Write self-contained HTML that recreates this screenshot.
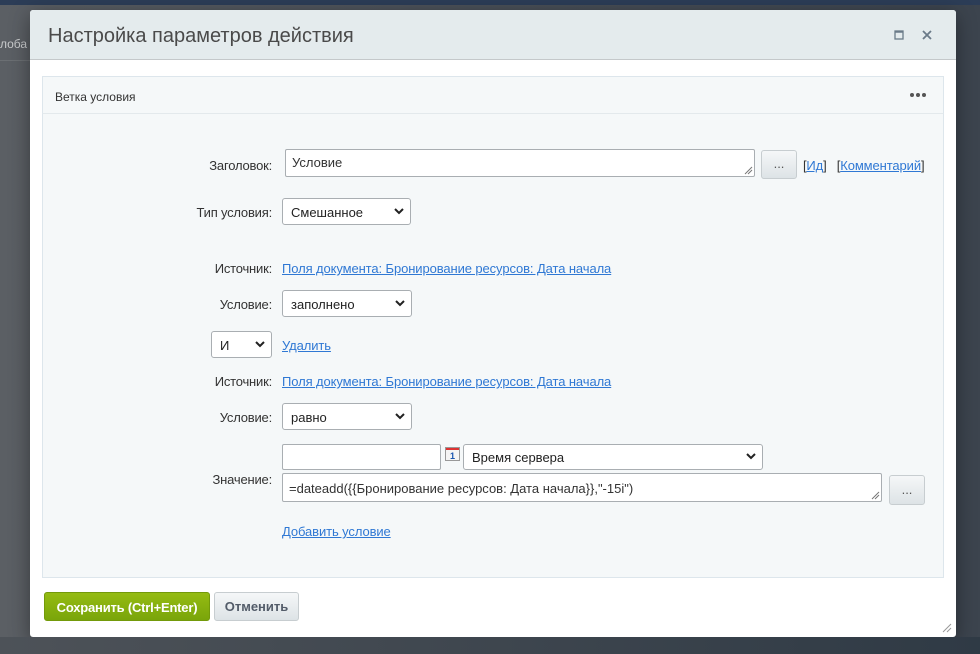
<!DOCTYPE html>
<html><head><meta charset="utf-8"><style>
*{box-sizing:border-box;margin:0;padding:0}
body{width:980px;height:654px;overflow:hidden;position:relative;font-family:"Liberation Sans","DejaVu Sans",sans-serif;font-size:13px;color:#333;background:linear-gradient(90deg,#5b5f64 0%,#4a5058 50%,#3c444e 100%)}
.topbar{position:absolute;left:0;top:0;width:980px;height:5px;background:#2c3d57}
.bottom{position:absolute;left:0;top:637px;width:980px;height:17px;background:linear-gradient(90deg,#4d5258,#2f3a45)}
.a{position:absolute}
.dlg{left:30px;top:10px;width:926px;height:627px;background:#fff;border-radius:3px;box-shadow:0 5px 20px rgba(0,0,0,.4)}
.hdr{left:30px;top:10px;width:926px;height:50px;background:#e4ebed;border-bottom:1px solid #c4c8ca;border-radius:3px 3px 0 0}
.title{left:48px;top:25px;font-size:20px;color:#4a4a4a}
.panel{left:42px;top:76px;width:902px;height:502px;background:#f5f8f9;border:1px solid #dde6ec}
.ph{left:42px;top:76px;width:902px;height:38px;border:1px solid #dde6ec;border-bottom:1px solid #e3e9ec}
.lbl{text-align:right;width:200px;font-size:13px;color:#333;letter-spacing:-0.2px}
.inp{background:#fff;border:1px solid #a9aeb2;border-radius:2px;font-size:13px;padding:0 6px;color:#333}
.sel{background:#fff;border:1px solid #a9aeb2;border-radius:3px;font-size:13px;padding:0 8px;color:#222}
.sel svg{position:absolute;right:6px;top:50%;margin-top:-4px}
.lnk{color:#2f78d4;text-decoration:underline;letter-spacing:-0.1px}
.btn{background:linear-gradient(#f5f7f8,#dde3e6);border:1px solid #c7cdd0;border-radius:3px;text-align:center;color:#555;font-size:13px}
</style></head><body>
<div class="topbar"></div>
<div class="a" style="left:0;top:37px;font-size:12px;color:#c8cacc">лоба</div>
<div class="a" style="left:0;top:60px;width:30px;height:1px;background:#6b6f73"></div>
<div class="a dlg"></div>
<div class="a hdr"></div>
<div class="a title">Настройка параметров действия</div>
<svg class="a" style="left:894px;top:30px" width="11" height="11"><rect x="1" y="1" width="8" height="8" fill="none" stroke="#6a7a88" stroke-width="1.3"/><line x1="1" y1="2" x2="9" y2="2" stroke="#6a7a88" stroke-width="1.5"/></svg>
<svg class="a" style="left:922px;top:30px" width="11" height="11"><path d="M1 1L9 9M9 1L1 9" stroke="#6a7a88" stroke-width="1.8"/></svg>
<div class="a panel"></div>
<div class="a ph"></div>
<div class="a" style="left:55px;top:90px;font-size:12px;color:#333">Ветка условия</div>
<svg class="a" style="left:909px;top:92px" width="18" height="6"><circle cx="3" cy="3" r="2" fill="#555"/><circle cx="9" cy="3" r="2" fill="#555"/><circle cx="15" cy="3" r="2" fill="#555"/></svg>

<div class="a lbl" style="left:72px;top:158px">Заголовок:</div>
<div class="a inp" style="left:285px;top:149px;width:470px;height:28px;line-height:26px">Условие</div>
<svg class="a" style="left:744px;top:166px" width="9" height="9"><path d="M1 8L8 1M4 8L8 4" stroke="#777"/></svg>
<div class="a btn" style="left:761px;top:150px;width:36px;height:29px;line-height:26px">...</div>
<div class="a" style="left:803px;top:158px;letter-spacing:-0.2px">[<span class="lnk">Ид</span>]&nbsp;&nbsp; [<span class="lnk">Комментарий</span>]</div>

<div class="a lbl" style="left:72px;top:205px">Тип условия:</div>
<div class="a sel" style="left:282px;top:198px;width:129px;height:27px;line-height:27px">Смешанное<svg width="10" height="7"><path d="M1 1L5 5L9 1" stroke="#222" stroke-width="2" fill="none"/></svg></div>

<div class="a lbl" style="left:72px;top:261px">Источник:</div>
<div class="a lnk" style="left:282px;top:261px">Поля документа: Бронирование ресурсов: Дата начала</div>
<div class="a lbl" style="left:72px;top:297px">Условие:</div>
<div class="a sel" style="left:282px;top:290px;width:130px;height:27px;line-height:27px">заполнено<svg width="10" height="7"><path d="M1 1L5 5L9 1" stroke="#222" stroke-width="2" fill="none"/></svg></div>

<div class="a sel" style="left:211px;top:331px;width:61px;height:27px;line-height:27px">И<svg width="10" height="7"><path d="M1 1L5 5L9 1" stroke="#222" stroke-width="2" fill="none"/></svg></div>
<div class="a lnk" style="left:282px;top:338px">Удалить</div>

<div class="a lbl" style="left:72px;top:374px">Источник:</div>
<div class="a lnk" style="left:282px;top:374px">Поля документа: Бронирование ресурсов: Дата начала</div>
<div class="a lbl" style="left:72px;top:410px">Условие:</div>
<div class="a sel" style="left:282px;top:403px;width:130px;height:27px;line-height:27px">равно<svg width="10" height="7"><path d="M1 1L5 5L9 1" stroke="#222" stroke-width="2" fill="none"/></svg></div>

<div class="a inp" style="left:282px;top:444px;width:159px;height:26px"></div>
<svg class="a" style="left:445px;top:447px" width="15" height="14"><rect x="0.5" y="0.5" width="14" height="13" fill="#f4f4f4" stroke="#999"/><rect x="1" y="1" width="13" height="2" fill="#d33"/><text x="5" y="12" font-size="9" font-family="Liberation Sans" fill="#1a56b0" font-weight="bold">1</text></svg>
<div class="a sel" style="left:463px;top:444px;width:300px;height:26px;line-height:26px">Время сервера<svg width="10" height="7"><path d="M1 1L5 5L9 1" stroke="#222" stroke-width="2" fill="none"/></svg></div>
<div class="a lbl" style="left:72px;top:472px">Значение:</div>
<div class="a inp" style="left:282px;top:473px;width:600px;height:29px;line-height:29px">=dateadd({{Бронирование ресурсов: Дата начала}},"-15i")</div>
<svg class="a" style="left:871px;top:491px" width="9" height="9"><path d="M1 8L8 1M4 8L8 4" stroke="#777"/></svg>
<div class="a btn" style="left:889px;top:475px;width:36px;height:30px;line-height:27px">...</div>
<div class="a lnk" style="left:282px;top:524px">Добавить условие</div>

<div class="a" style="left:44px;top:592px;width:166px;height:29px;line-height:29px;background:linear-gradient(#95bb12,#7aa50a);border:1px solid #739a0a;border-radius:3px;color:#fff;font-weight:bold;text-align:center;font-size:13px;letter-spacing:-0.2px">Сохранить (Ctrl+Enter)</div>
<div class="a btn" style="left:214px;top:592px;width:85px;height:29px;line-height:28px;font-weight:bold;color:#535c69">Отменить</div>
<svg class="a" style="left:942px;top:623px" width="10" height="10"><path d="M1 9L9 1M5 9L9 5" stroke="#999"/></svg>
<div class="bottom"></div>
</body></html>
